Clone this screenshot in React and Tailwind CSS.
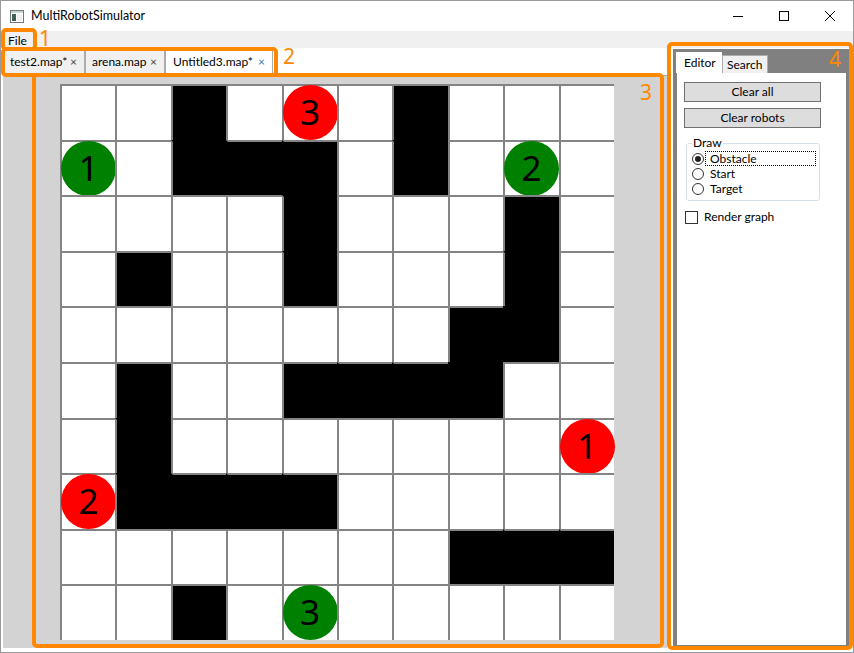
import React from 'react';

const ROWS = [
  ['.', '.', '#', '.', 'r3', '.', '#', '.', '.', '.'],
  ['g1', '.', '#', '#', '#', '.', '#', '.', 'g2', '.'],
  ['.', '.', '.', '.', '#', '.', '.', '.', '#', '.'],
  ['.', '#', '.', '.', '#', '.', '.', '.', '#', '.'],
  ['.', '.', '.', '.', '.', '.', '.', '#', '#', '.'],
  ['.', '#', '.', '.', '#', '#', '#', '#', '.', '.'],
  ['.', '#', '.', '.', '.', '.', '.', '.', '.', 'r1'],
  ['r2', '#', '#', '#', '#', '.', '.', '.', '.', '.'],
  ['.', '.', '.', '.', '.', '.', '.', '#', '#', '#'],
  ['.', '.', '#', '.', 'g3', '.', '.', '.', '.', '.'],
];

const isBlack = (r, c) => r >= 0 && c >= 0 && ROWS[r][c] === '#';

const Cell = ({ r, c, v }) => {
  const black = v === '#';
  const left = black && isBlack(r, c - 1) ? 'border-l-black' : 'border-l-[#848484]';
  const top = black && isBlack(r - 1, c) ? 'border-t-black' : 'border-t-[#848484]';
  return (
    <div className={`relative border-l-2 border-t-2 ${left} ${top} ${black ? 'bg-black' : 'bg-white'}`}>
      {v.length === 2 && (
        <div
          className={`absolute left-[-1px] top-[-1px] w-[55px] h-[55px] rounded-full flex items-center justify-center text-black text-[35px] leading-none font-['Noto_Sans',sans-serif] ${v[0] === 'r' ? 'bg-[#ff0000]' : 'bg-[#008000]'}`}
        >
          <span className="-mt-[2px]">{v[1]}</span>
        </div>
      )}
    </div>
  );
};

const Tab = ({ label, width, selected }) => (
  <div
    className={`flex items-center pl-[6px] pr-[7px] border border-[#acacac] ${width} ${
      selected ? 'bg-white h-[27px] border-b-0 pl-[7px]' : 'bg-[#f0f0f0] h-[24px] mt-[2px]'
    }`}
  >
    <span className="text-black whitespace-nowrap">{label}</span>
    <span className={`ml-auto shrink-0 text-[12px] leading-none ${selected ? 'text-[#3b78b5]' : 'text-[#444]'}`}>×</span>
  </div>
);

const Mark = ({ className }) => (
  <div className={`absolute border-[4px] border-[#ff8800] rounded-[5px] pointer-events-none ${className}`} />
);

const Num = ({ children, className }) => (
  <div className={`absolute text-[#ff8800] text-[21px] leading-none font-['Noto_Sans',sans-serif] ${className}`}>{children}</div>
);

const Radio = ({ checked }) => (
  <div className="w-[12px] h-[12px] shrink-0 rounded-full border border-[#333] flex items-center justify-center">
    {checked && <div className="w-[6px] h-[6px] rounded-full bg-[#222]" />}
  </div>
);

export default function App() {
  return (
    <div className="relative w-[854px] h-[653px] overflow-hidden border border-[#9a9a9a] bg-white text-[12px] text-black font-['Lato',sans-serif] flex flex-col">
      {/* Title bar */}
      <div className="h-[30px] flex items-center shrink-0">
        <svg width="14" height="13" viewBox="0 0 14 13" className="ml-[9px] mt-[1px]">
          <rect x="0.5" y="0.5" width="13" height="12" fill="#fff" stroke="#6f7a78" />
          <rect x="1" y="1" width="12" height="2" fill="#c9d2d0" />
          <rect x="2" y="4" width="4" height="7" fill="#3e5f56" />
          <rect x="7" y="4" width="5" height="7" fill="#eef1f0" />
        </svg>
        <span className="ml-[7px] text-[12.5px]">MultiRobotSimulator</span>
        <div className="ml-auto flex h-full">
          <div className="w-[46px] flex items-center justify-center">
            <svg width="10" height="10" viewBox="0 0 10 10"><path d="M0 5.5H10" stroke="#000" /></svg>
          </div>
          <div className="w-[46px] flex items-center justify-center">
            <svg width="10" height="10" viewBox="0 0 10 10"><rect x="0.5" y="0.5" width="9" height="9" fill="none" stroke="#000" /></svg>
          </div>
          <div className="w-[46px] flex items-center justify-center">
            <svg width="10" height="10" viewBox="0 0 10 10"><path d="M0 0L10 10M10 0L0 10" stroke="#000" /></svg>
          </div>
        </div>
      </div>

      {/* Menu */}
      <div className="h-[17px] bg-[#f0f0f0] flex items-center shrink-0">
        <span className="ml-[7px] mt-[2px]">File</span>
      </div>

      {/* Body */}
      <div className="flex-1 flex min-h-0">
        <div className="w-[672px] flex flex-col">
          <div className="h-[27px] flex items-start pl-[2px] shrink-0">
            <Tab label="test2.map*" width="w-[82px]" />
            <Tab label="arena.map" width="w-[80px]" />
            <Tab label="Untitled3.map*" width="w-[108px]" selected />
          </div>
          <div className="flex-1 ml-[2px] mr-[6px] mb-[4px] border-t border-[#acacac] bg-[#d3d3d3] pl-[57px] pt-[8px]">
            <div className="grid grid-cols-[repeat(10,55.4px)] grid-rows-[repeat(10,55.6px)]">
              {ROWS.map((row, r) => row.map((v, c) => <Cell key={`${r}-${c}`} r={r} c={c} v={v} />))}
            </div>
          </div>
        </div>

        {/* Right panel */}
        <div className="w-[176px] mt-[1px] mb-[4px] bg-[#808080] flex flex-col">
          <div className="h-[24px] flex items-end pl-[3px] shrink-0">
            <div className="h-[21px] w-[46px] bg-white pl-[8px] pt-[4px] leading-[14px]">Editor</div>
            <div className="h-[18px] w-[46px] bg-[#f0f0f0] border border-[#acacac] border-b-0 pl-[4px] pt-[2px] leading-[14px]">Search</div>
          </div>
          <div className="flex-1 bg-white ml-[4px] mr-[3px] mb-[3px] pl-[7px] pt-[9px]">
            <div className="w-[137px] h-[20px] bg-[#dddddd] border border-[#707070] flex items-center justify-center">Clear all</div>
            <div className="w-[137px] h-[20px] mt-[6px] bg-[#dddddd] border border-[#707070] flex items-center justify-center">Clear robots</div>
            <div className="relative ml-[2px] mt-[15px] w-[134px] h-[58px] border border-[#d5dfe5] rounded-[3px] pl-[5px] pt-[7px]">
              <span className="absolute left-[5px] -top-[9px] bg-white px-[1px] leading-[15px]">Draw</span>
              <div className="flex items-center h-[15px] leading-[13px]">
                <Radio checked />
                <span className="ml-[1px] pl-[4px] w-[111px] border border-dotted border-black">Obstacle</span>
              </div>
              <div className="flex items-center h-[15px] leading-[13px]">
                <Radio />
                <span className="ml-[6px]">Start</span>
              </div>
              <div className="flex items-center h-[15px] leading-[13px]">
                <Radio />
                <span className="ml-[6px]">Target</span>
              </div>
            </div>
            <div className="flex items-center mt-[7px] ml-[1px]">
              <div className="w-[13px] h-[13px] border border-[#333]" />
              <span className="ml-[6px]">Render graph</span>
            </div>
          </div>
        </div>
      </div>

      {/* Annotations */}
      <Mark className="left-[0px] top-[27px] w-[36px] h-[23px]" />
      <Num className="left-[38px] top-[27px]">1</Num>
      <Mark className="left-[0px] top-[46px] w-[277px] h-[30px]" />
      <Num className="left-[282px] top-[45px]">2</Num>
      <Mark className="left-[31px] top-[72px] w-[632px] h-[575px]" />
      <Num className="left-[639px] top-[81px]">3</Num>
      <Mark className="left-[666px] top-[41px] w-[186px] h-[608px]" />
      <Num className="left-[828px] top-[48px]">4</Num>
    </div>
  );
}
